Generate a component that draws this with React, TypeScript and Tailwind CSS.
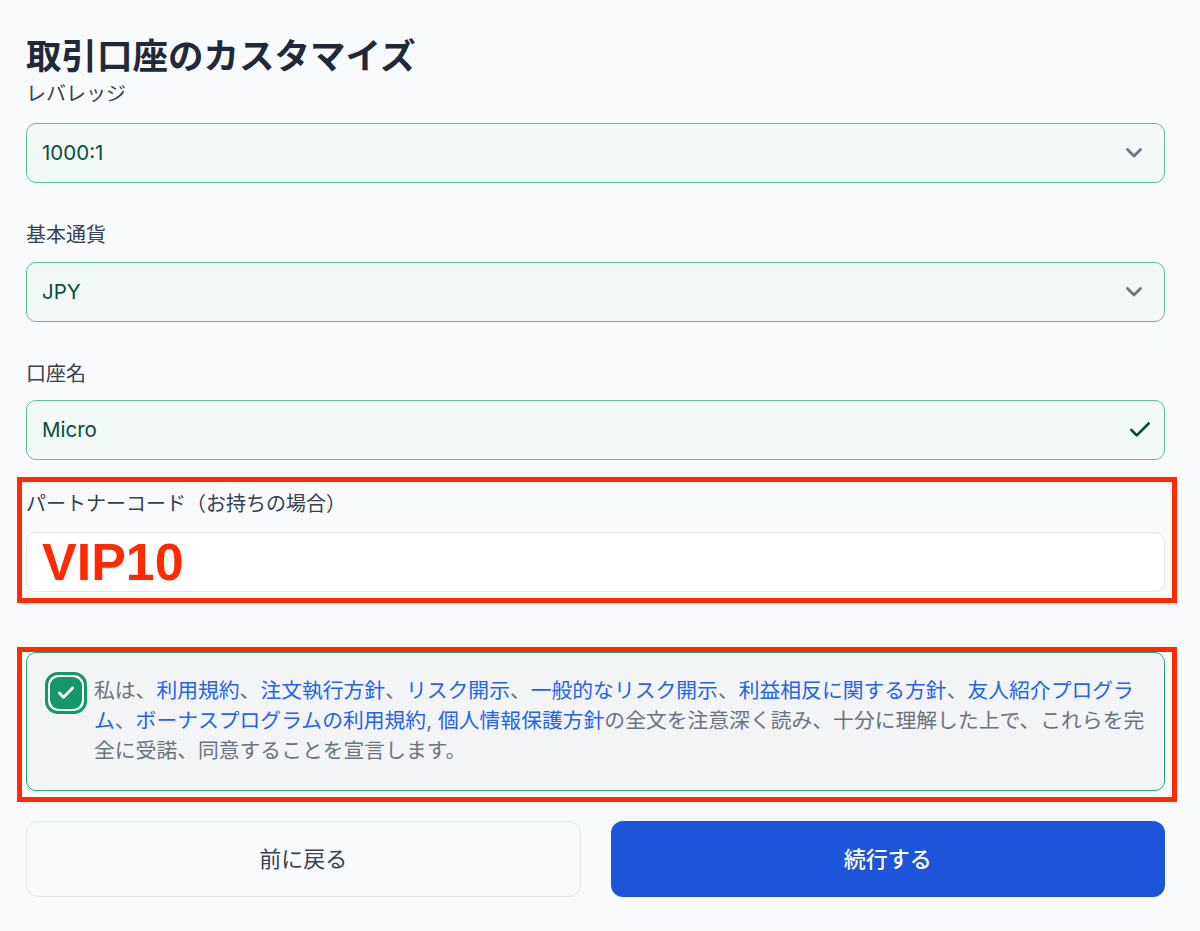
import { Check } from "lucide-react";
import { type ReactNode } from "react";

/* Red annotation frame drawn over a block of the form */
function Marker({ className }: { className: string }) {
  return <div className={`pointer-events-none absolute border-[5px] border-[#ff2a00] ${className}`} />;
}

function Label({ children, className = "" }: { children: ReactNode; className?: string }) {
  return <p className={`text-[20px] leading-7 text-[#374151] ${className}`}>{children}</p>;
}

function Chevron() {
  return (
    <svg width="18" height="12" viewBox="0 0 18 12" fill="none" className="text-[#6b7280]">
      <path d="M2.5 2.5 9 9l6.5-6.5" stroke="currentColor" strokeWidth="2.8" strokeLinecap="round" strokeLinejoin="round" />
    </svg>
  );
}

function GreenBox({ value, icon }: { value: string; icon: "chevron" | "check" }) {
  return (
    <div className="h-[60px] rounded-[10px] border border-[#5cc29a] bg-[#f2f8f6] pl-[15px] pr-[21px] flex items-center justify-between">
      <span className="text-[20.5px] text-[#064e3b]">{value}</span>
      {icon === "chevron" ? (
        <Chevron />
      ) : (
        <Check size={26} strokeWidth={2.4} className="text-[#064e3b] -mr-[10px]" />
      )}
    </div>
  );
}

const blue = "text-[#2563eb]";

export default function App() {
  return (
    <div className="min-h-screen bg-[#f9fafb] font-[family-name:Inter,'Noto_Sans_CJK_JP',sans-serif]">
      <div className="ml-[26px] w-[1139px] pt-[37px] pb-10">
        <h1 className="text-[35.5px] leading-[40px] font-bold text-[#1f2937]">取引口座のカスタマイズ</h1>

        <Label className="mt-[3px] mb-[15px]">レバレッジ</Label>
        <GreenBox value="1000:1" icon="chevron" />

        <Label className="mt-[38px] mb-[13px]">基本通貨</Label>
        <GreenBox value="JPY" icon="chevron" />

        <Label className="mt-[38px] mb-[12px]">口座名</Label>
        <GreenBox value="Micro" icon="check" />

        {/* partner code */}
        <div className="relative mt-[30px]">
          <Label className="mb-[14px]">パートナーコード（お持ちの場合）</Label>
          <div className="h-[60px] rounded-[10px] border border-[#e5e7eb] bg-white pl-[15px] flex items-center">
            <span className="font-[family-name:'Liberation_Sans',Arial,sans-serif] font-bold text-[52px] leading-none text-[#ff2a00]">
              VIP10
            </span>
          </div>
          <Marker className="-top-[13px] -bottom-[11px] -left-[9px] -right-[12px]" />
        </div>

        {/* consent */}
        <div className="relative mt-[60px]">
          <div className="rounded-[10px] border border-[#22a97a] bg-[#f3f4f6] pl-[18px] pt-[19px] pb-[24px] flex items-start gap-[7px]">
            <div className="shrink-0 w-[42px] h-[42px] rounded-[13px] border-[3px] border-[#14976a] bg-white p-[2px]">
              <div className="w-full h-full rounded-[9px] bg-[#14976a] flex items-center justify-center">
                <Check size={20} strokeWidth={3.5} className="text-white" />
              </div>
            </div>
            <p className="mt-[4px] w-[1056px] text-[20.8px] leading-[30px] text-[#6b7280]">
              私は、<span className={blue}>利用規約</span>、<span className={blue}>注文執行方針</span>、
              <span className={blue}>リスク開示</span>、<span className={blue}>一般的なリスク開示</span>、
              <span className={blue}>利益相反に関する方針</span>、<span className={blue}>友人紹介プログラム</span>、
              <span className={blue}>ボーナスプログラムの利用規約</span>, <span className={blue}>個人情報保護方針</span>
              の全文を注意深く読み、十分に理解した上で、これらを完全に受諾、同意することを宣言します。
            </p>
          </div>
          <Marker className="-top-[5px] -bottom-[11px] -left-[9px] -right-[12px]" />
        </div>

        {/* actions */}
        <div className="mt-[30px] grid grid-cols-2 gap-[30px]">
          <button className="h-[76px] rounded-[12px] border border-[#e5e7eb] bg-[#f9fafb] text-[22px] text-[#374151]">
            前に戻る
          </button>
          <button className="h-[76px] rounded-[12px] bg-[#1c55d9] text-[22px] font-medium text-white">
            続行する
          </button>
        </div>
      </div>
    </div>
  );
}
